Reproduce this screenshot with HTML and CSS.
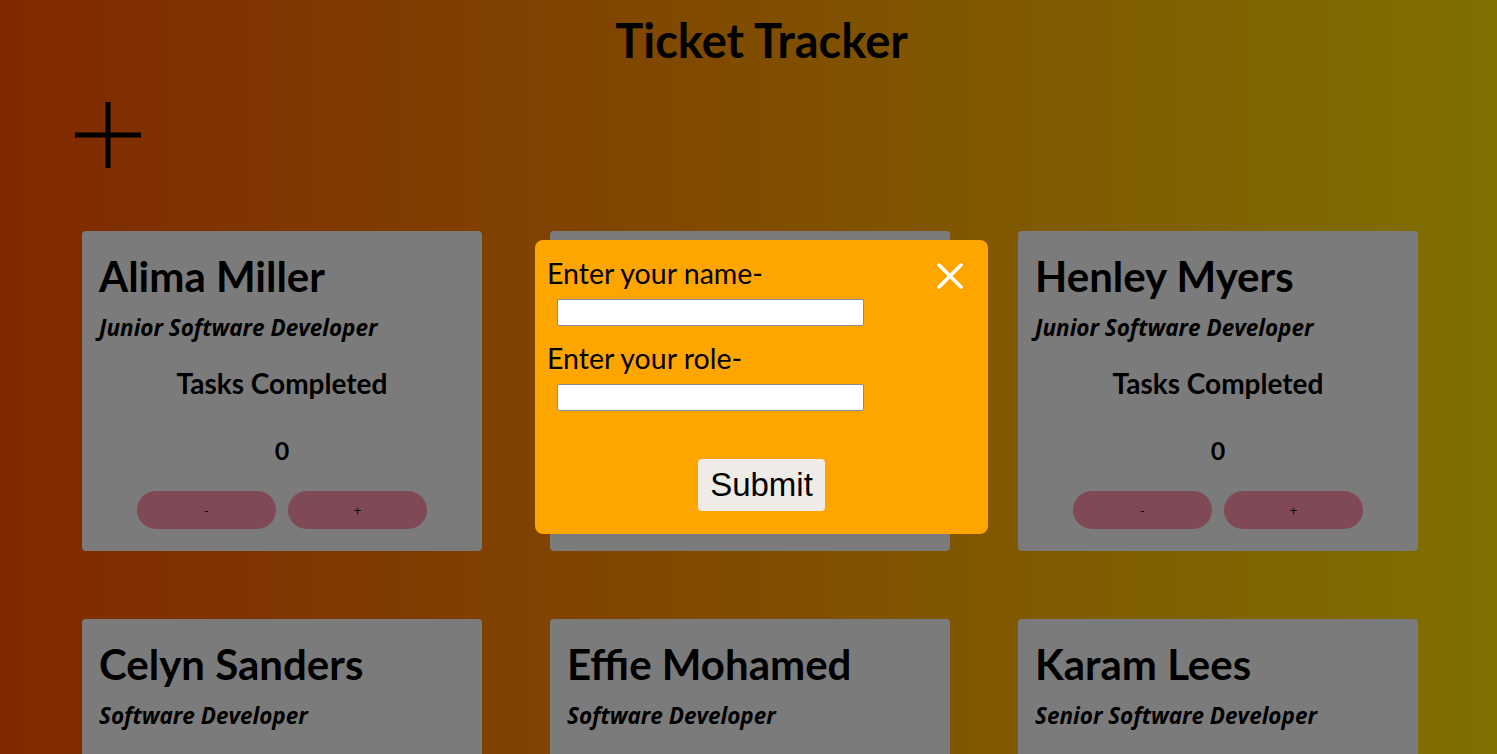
FILE: index.html
```html
<!DOCTYPE html>
<html lang="en">
<head>
<meta charset="utf-8">
<title>Ticket Tracker</title>
<link rel="stylesheet" href="styles.css">
</head>
<body>
<div class="page">
  <h1 class="title">Ticket Tracker</h1>
  <button class="add-btn" aria-label="Add">
    <svg width="66" height="66" viewBox="0 0 66 66"><path d="M33 0V66M0 33H66" stroke="#000" stroke-width="5" fill="none"/></svg>
  </button>
  <main class="grid">
    <section class="card">
      <h2 class="name">Alima Miller</h2>
      <p class="role">Junior Software Developer</p>
      <h3 class="tasks">Tasks Completed</h3>
      <p class="count">0</p>
      <div class="controls"><button class="ctl">-</button><button class="ctl">+</button></div>
    </section>
    <section class="card">
      <h2 class="name">Fahad Hardy</h2>
      <p class="role">Software Developer</p>
      <h3 class="tasks">Tasks Completed</h3>
      <p class="count">0</p>
      <div class="controls"><button class="ctl">-</button><button class="ctl">+</button></div>
    </section>
    <section class="card">
      <h2 class="name">Henley Myers</h2>
      <p class="role">Junior Software Developer</p>
      <h3 class="tasks">Tasks Completed</h3>
      <p class="count">0</p>
      <div class="controls"><button class="ctl">-</button><button class="ctl">+</button></div>
    </section>
    <section class="card">
      <h2 class="name">Celyn Sanders</h2>
      <p class="role">Software Developer</p>
      <h3 class="tasks">Tasks Completed</h3>
      <p class="count">0</p>
      <div class="controls"><button class="ctl">-</button><button class="ctl">+</button></div>
    </section>
    <section class="card">
      <h2 class="name">Effie Mohamed</h2>
      <p class="role">Software Developer</p>
      <h3 class="tasks">Tasks Completed</h3>
      <p class="count">0</p>
      <div class="controls"><button class="ctl">-</button><button class="ctl">+</button></div>
    </section>
    <section class="card">
      <h2 class="name">Karam Lees</h2>
      <p class="role">Senior Software Developer</p>
      <h3 class="tasks">Tasks Completed</h3>
      <p class="count">0</p>
      <div class="controls"><button class="ctl">-</button><button class="ctl">+</button></div>
    </section>
  </main>
</div>
<div class="modal">
  <form class="modal-form">
    <div class="modal-head">
      <label class="modal-label" for="nm">Enter your name-</label>
      <button type="button" class="close" aria-label="Close">
        <svg width="26" height="26" viewBox="0 0 26 26"><path d="M2 2L24 24M24 2L2 24" stroke="#fff" stroke-width="3.5" stroke-linecap="round" fill="none"/></svg>
      </button>
    </div>
    <input class="modal-input" id="nm" type="text">
    <label class="modal-label" for="rl">Enter your role-</label>
    <input class="modal-input" id="rl" type="text">
    <div class="submit-row"><button type="button" class="submit">Submit</button></div>
  </form>
</div>
</body>
</html>
```
FILE: styles.css
```css
html, body {
  margin: 0;
  height: 100%;
  overflow: hidden;
}
body {
  background: linear-gradient(to right, #802900, #807000);
  font-family: Lato, "Open Sans", sans-serif;
  color: #000;
}
.page {
  display: flex;
  flex-direction: column;
}
.title {
  margin: 11px 0 0;
  padding-left: 26px;
  font-size: 47px;
  line-height: 58px;
  text-align: center;
  font-weight: 700;
}
.add-btn {
  margin: 33px 0 0 75px;
  padding: 0;
  width: 66px;
  height: 66px;
  border: none;
  background: none;
  display: block;
}
.add-btn svg { display: block; }
.grid {
  display: grid;
  grid-template-columns: repeat(3, 400px);
  column-gap: 68px;
  row-gap: 68px;
  padding-left: 82px;
  margin-top: 63px;
}
.card {
  background: #7b7b7b;
  border-radius: 4px;
  height: 320px;
  box-sizing: border-box;
  padding: 20px 17px 0;
  display: flex;
  flex-direction: column;
}
.name {
  margin: 0;
  font-size: 42px;
  line-height: 50px;
  font-weight: 700;
}
.role {
  margin: 13px 0 0;
  font-family: "Open Sans", Lato, sans-serif;
  font-size: 22.5px;
  line-height: 28px;
  font-style: italic;
  font-weight: 700;
}
.tasks {
  margin: 25px 0 0;
  font-size: 28px;
  line-height: 32px;
  text-align: center;
  font-weight: 700;
}
.count {
  margin: 36px 0 0;
  font-size: 25px;
  line-height: 30px;
  text-align: center;
  font-weight: 700;
}
.controls {
  margin-top: 26px;
  display: flex;
  justify-content: center;
  gap: 12px;
}
.ctl {
  width: 139px;
  height: 38px;
  border: none;
  border-radius: 19px;
  background: #7f4a55;
  font-family: "Liberation Sans", Arial, sans-serif;
  font-size: 13px;
  color: #000;
  padding: 0;
}
.modal {
  position: absolute;
  left: 535px;
  top: 240px;
  width: 453px;
  height: 294px;
  box-sizing: border-box;
  background: #ffa500;
  border-radius: 8px;
  padding: 14px 12px 0;
}
.modal-form {
  display: flex;
  flex-direction: column;
  align-items: flex-start;
}
.modal-head {
  align-self: stretch;
  display: flex;
  justify-content: space-between;
  align-items: flex-start;
}
.modal-label {
  font-size: 28.5px;
  line-height: 38px;
  font-weight: 400;
}
.close {
  margin: 9px 13px 0 0;
  padding: 0;
  border: none;
  background: none;
  width: 26px;
  height: 26px;
}
.close svg { display: block; }
.modal-input {
  margin: 7px 0 13px 10px;
  width: 307px;
  height: 27px;
  box-sizing: border-box;
  border: 1px solid #8a8a8a;
  border-radius: 2px;
  background: #fff;
  padding: 0 4px;
}
.submit-row {
  align-self: stretch;
  display: flex;
  justify-content: center;
  margin-top: 35px;
}
.submit {
  font-family: "Liberation Sans", Arial, sans-serif;
  font-size: 33px;
  line-height: 38px;
  padding: 7px 12px;
  border: none;
  border-radius: 4px;
  background: #efebe7;
  color: #000;
}
```
